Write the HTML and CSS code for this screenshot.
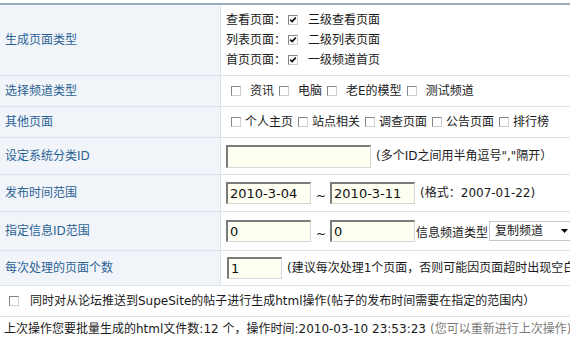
FILE: index.html
```html
<!DOCTYPE html>
<html lang="zh-CN">
<head>
<meta charset="utf-8">
<title>批量生成HTML</title>
<link rel="stylesheet" href="styles.css">
</head>
<body>
<div class="form">
  <div class="lab">生成页面类型</div>
  <div class="val stack">
    <div class="line">查看页面：<span class="cb on tight"><svg viewBox="0 0 8 8" width="8" height="8"><path d="M1.2 3.6 L3.2 5.6 L6.8 1.6" fill="none" stroke="#111" stroke-width="1.7"/></svg></span>三级查看页面</div>
    <div class="line">列表页面：<span class="cb on tight"><svg viewBox="0 0 8 8" width="8" height="8"><path d="M1.2 3.6 L3.2 5.6 L6.8 1.6" fill="none" stroke="#111" stroke-width="1.7"/></svg></span>二级列表页面</div>
    <div class="line">首页页面：<span class="cb on tight"><svg viewBox="0 0 8 8" width="8" height="8"><path d="M1.2 3.6 L3.2 5.6 L6.8 1.6" fill="none" stroke="#111" stroke-width="1.7"/></svg></span>一级频道首页</div>
  </div>

  <div class="lab">选择频道类型</div>
  <div class="val">
    <span class="opt wide"><span class="cb"></span>资讯</span>
    <span class="opt wide"><span class="cb"></span>电脑</span>
    <span class="opt wide"><span class="cb"></span>老E的模型</span>
    <span class="opt wide"><span class="cb"></span>测试频道</span>
  </div>

  <div class="lab">其他页面</div>
  <div class="val">
    <span class="opt"><span class="cb"></span>个人主页</span>
    <span class="opt"><span class="cb"></span>站点相关</span>
    <span class="opt"><span class="cb"></span>调查页面</span>
    <span class="opt"><span class="cb"></span>公告页面</span>
    <span class="opt"><span class="cb"></span>排行榜</span>
  </div>

  <div class="lab">设定系统分类ID</div>
  <div class="val">
    <input class="inp w145" type="text" value="">
    <span class="hint">(多个ID之间用半角逗号","隔开）</span>
  </div>

  <div class="lab">发布时间范围</div>
  <div class="val">
    <input class="inp w85" type="text" value="2010-3-04">
    <span class="tilde">~</span>
    <input class="inp w85" type="text" value="2010-3-11">
    <span class="hint">(格式：2007-01-22)</span>
  </div>

  <div class="lab">指定信息ID范围</div>
  <div class="val">
    <input class="inp w85" type="text" value="0">
    <span class="tilde">~</span>
    <input class="inp w85" type="text" value="0">
    <span class="kind">信息频道类型</span>
    <span class="sel">复制频道<svg width="7" height="4" viewBox="0 0 7 4"><path d="M0 0 H7 L3.5 4 Z" fill="#000"/></svg></span>
  </div>

  <div class="lab">每次处理的页面个数</div>
  <div class="val">
    <input class="inp w55" type="text" value="1">
    <span class="hint">(建议每次处理1个页面，否则可能因页面超时出现空白页面)</span>
  </div>

  <div class="full push"><span class="cb wide8"></span>同时对从论坛推送到SupeSite的帖子进行生成html操作(帖子的发布时间需要在指定的范围内）</div>

  <div class="full last">上次操作您要批量生成的html文件数:12 个，操作时间:2010-03-10 23:53:23 <span class="muted">(您可以重新进行上次操作)</span></div>
</div>
</body>
</html>
```

FILE: styles.css
```css
html {
  overflow: hidden;
}

body {
  margin: 0;
  background: #fff;
  font-family: "DejaVu Sans", "Noto Sans CJK SC", sans-serif;
  font-size: 12px;
  color: #1a1a1a;
}

.form {
  margin-top: 3px;
  border-top: 2px solid #95adbf;
  display: grid;
  grid-template-columns: 221px minmax(0, 1fr);
  grid-template-rows: 71px 31px 31px 37px 37px 39px 35px 31px auto;
}

.lab,
.val,
.full {
  box-sizing: border-box;
  border-bottom: 1px solid #d9e3ec;
  display: flex;
  align-items: center;
  white-space: nowrap;
  line-height: 20px;
}

.lab {
  background: #f1f5fa;
  border-right: 1px solid #d9e3ec;
  padding-left: 5px;
  color: #2b6294;
}

.val {
  padding-left: 5px;
}

.stack {
  flex-direction: column;
  align-items: flex-start;
  justify-content: center;
}

.line {
  display: flex;
  align-items: center;
  height: 20px;
}

.cb {
  display: inline-flex;
  align-items: center;
  justify-content: center;
  box-sizing: border-box;
  width: 10px;
  height: 10px;
  border: 1px solid;
  border-color: #858585 #cfcfcf #cfcfcf #858585;
  background: #fff;
  flex: none;
}

.cb.tight {
  margin: 0 10px 0 2px;
}

.opt {
  display: inline-flex;
  align-items: center;
}

.opt .cb {
  margin: 0 4px 0 5px;
}

.opt.wide .cb {
  margin: 0 9px 0 5px;
}

.inp {
  box-sizing: border-box;
  height: 22px;
  margin: 0;
  padding: 0 2px;
  border-style: solid;
  border-width: 2px 1px 1px 2px;
  border-color: #7b7b7b #d6d6d6 #d6d6d6 #7b7b7b;
  background: #fefef1;
  font-family: "DejaVu Sans", sans-serif;
  font-size: 13px;
  color: #111;
  flex: none;
}

.w145 {
  width: 145px;
  height: 23px;
}

.w85 {
  width: 85px;
}

.w55 {
  width: 55px;
  margin-left: 1px;
}

.hint {
  margin-left: 5px;
}

.tilde {
  margin: 6px 4px 0 5px;
  font-size: 12px;
}

.kind {
  margin-left: 1px;
  margin-top: 4px;
}

.sel {
  display: inline-flex;
  align-items: center;
  justify-content: space-between;
  box-sizing: border-box;
  width: 90px;
  height: 20px;
  margin-left: 1px;
  padding: 0 10px 0 5px;
  border: 1px solid #c6c6c6;
  background: #fff;
  flex: none;
}

.full {
  grid-column: 1 / -1;
}

.push .cb.wide8 {
  margin: 0 11px 0 9px;
}

.last {
  border-bottom: none;
  padding-left: 4px;
  align-items: flex-start;
  padding-top: 1px;
  line-height: 22px;
}

.muted {
  margin-left: 4px;
  color: #7a7a7a;
}
```
